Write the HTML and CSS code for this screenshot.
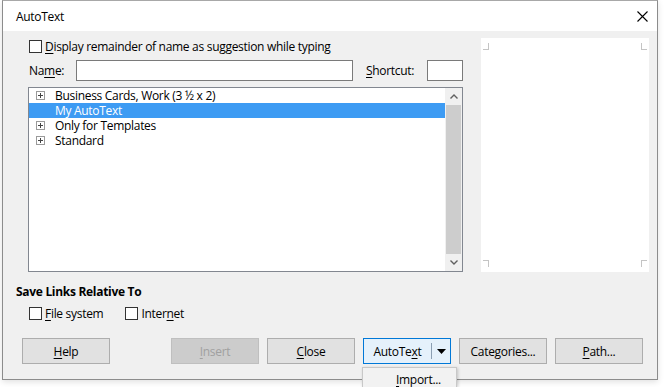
FILE: index.html
```html
<!DOCTYPE HTML>
<html lang="en-US">
<head>
<meta charset="UTF-8">
<title>AutoText</title>
<link rel="stylesheet" href="styles.css">
</head>
<body>
<div class="dialog">
	<div class="titlebar">
		<span class="title">AutoText</span>
		<svg class="close" width="11" height="11" viewBox="0 0 11 11"><path d="M0.5 0.5L10.5 10.5M10.5 0.5L0.5 10.5" stroke="#000" stroke-width="1.1" fill="none"/></svg>
	</div>
	<div class="main">
		<div class="left">
			<div class="check-row"><span class="box"></span><span><u>D</u>isplay remainder of name as suggestion while typing</span></div>
			<div class="name-row">
				<span class="name-label">Na<u>m</u>e:</span>
				<span class="field name-field"></span>
				<span class="shortcut-label"><u>S</u>hortcut:</span>
				<span class="field shortcut-field"></span>
			</div>
			<div class="tree">
				<ul class="tree-items">
					<li><svg class="expander" width="9" height="9" viewBox="0 0 9 9"><rect x="0.5" y="0.5" width="8" height="8" fill="#fff" stroke="#9a9a9a"/><path d="M2 4.5H7M4.5 2V7" stroke="#444"/></svg>Business Cards, Work (3 ½ x 2)</li>
					<li class="selected">My AutoText</li>
					<li><svg class="expander" width="9" height="9" viewBox="0 0 9 9"><rect x="0.5" y="0.5" width="8" height="8" fill="#fff" stroke="#9a9a9a"/><path d="M2 4.5H7M4.5 2V7" stroke="#444"/></svg>Only for Templates</li>
					<li><svg class="expander" width="9" height="9" viewBox="0 0 9 9"><rect x="0.5" y="0.5" width="8" height="8" fill="#fff" stroke="#9a9a9a"/><path d="M2 4.5H7M4.5 2V7" stroke="#444"/></svg>Standard</li>
				</ul>
				<div class="scrollbar">
					<span class="arrow"><svg width="8" height="5" viewBox="0 0 8 5"><path d="M0.5 4.5L4 1L7.5 4.5" stroke="#606060" stroke-width="1.4" fill="none"/></svg></span>
					<span class="thumb"></span>
					<span class="arrow"><svg width="8" height="5" viewBox="0 0 8 5"><path d="M0.5 0.5L4 4L7.5 0.5" stroke="#606060" stroke-width="1.4" fill="none"/></svg></span>
				</div>
			</div>
		</div>
		<div class="preview">
			<div class="marks"><span class="mark tl"></span><span class="mark tr"></span></div>
			<div class="marks"><span class="mark bl"></span><span class="mark br"></span></div>
		</div>
	</div>
	<div class="links-title">Save Links Relative To</div>
	<div class="links">
		<span class="link-opt"><span class="box"></span><span><u>F</u>ile system</span></span>
		<span class="link-opt"><span class="box"></span><span>Inter<u>n</u>et</span></span>
	</div>
	<div class="buttons">
		<span class="btn"><span><u>H</u>elp</span></span>
		<span class="btn disabled insert"><span><u>I</u>nsert</span></span>
		<span class="btn"><span><u>C</u>lose</span></span>
		<span class="btn split"><span class="split-text">AutoTe<u>x</u>t</span><span class="split-sep"></span><span class="split-arrow"><svg width="9" height="5" viewBox="0 0 9 5"><path d="M0 0H9L4.5 5Z" fill="#000"/></svg></span></span>
		<span class="btn"><span>Cate<u>g</u>ories...</span></span>
		<span class="btn"><span><u>P</u>ath...</span></span>
	</div>
	<div class="menu"><u>I</u>mport...</div>
</div>
</body>
</html>
```
FILE: styles.css
```css
html { overflow:hidden; }
html, body { margin:0; padding:0; }
body { min-height:387px; background:#fff; font:12px "Open Sans","Liberation Sans",sans-serif; letter-spacing:-0.3px; color:#000; }
u { text-decoration:underline; text-underline-offset:2px; }
.dialog { position:relative; box-sizing:border-box; width:656px; height:380px; margin-left:2px; background:#f0f0f0; border:1px solid #8c8c8c; border-top-color:#a8a8a8; box-shadow:0 2px 6px rgba(0,0,0,.12); }
.titlebar { display:flex; align-items:center; justify-content:space-between; height:30px; padding:0 9px 0 13px; background:#fff; }
.main { display:flex; padding:7px 7px 0 13px; }
.left { width:447px; }
.check-row { display:flex; align-items:center; height:17px; padding-left:13px; }
.box { box-sizing:border-box; width:13px; height:13px; margin-right:3px; background:#fff; border:1px solid #333; }
.name-row { display:flex; align-items:center; height:21px; margin-top:5px; }
.name-label { width:47px; padding-left:13px; }
.field { box-sizing:border-box; height:21px; background:#fff; border:1px solid #7a7a7a; }
.name-field { width:277px; }
.shortcut-label { margin-left:13px; }
.shortcut-field { width:36px; margin-left:auto; }
.tree { display:flex; box-sizing:border-box; height:185px; margin:6px 0 0 12px; background:#fff; border:1px solid #828790; }
.tree-items { flex:1; margin:0; padding:0; list-style:none; }
.tree-items li { display:flex; align-items:center; height:15px; padding-left:7px; line-height:15px; white-space:nowrap; }
.tree-items .selected { padding-left:26px; background:#3d9bf3; color:#fff; }
.expander { margin-right:10px; }
.scrollbar { display:flex; flex-direction:column; width:17px; background:#f0f0f0; }
.arrow { display:flex; align-items:center; justify-content:center; height:17px; }
.thumb { flex:1; margin:0 1px; background:#cdcdcd; }
.preview { box-sizing:border-box; display:flex; flex-direction:column; justify-content:space-between; width:168px; height:234px; margin-left:18px; padding:5px 2px; background:#fff; }
.marks { display:flex; justify-content:space-between; }
.mark { box-sizing:border-box; width:6px; height:7px; border:0 solid #c4c4c4; }
.tl { border-right-width:1px; border-bottom-width:1px; }
.tr { border-left-width:1px; border-bottom-width:1px; }
.bl { border-right-width:1px; border-top-width:1px; }
.br { border-left-width:1px; border-top-width:1px; }
.links-title { height:16px; margin:12px 0 0 13px; line-height:16px; font-weight:bold; }
.links { display:flex; align-items:center; gap:22px; height:18px; margin-top:4px; padding-left:26px; }
.link-opt { display:flex; align-items:center; }
.buttons { display:flex; gap:8px; margin-top:16px; padding-left:19px; }
.btn { box-sizing:border-box; display:flex; align-items:center; justify-content:center; width:88px; height:26px; background:#e1e1e1; border:1px solid #adadad; }
.insert { margin-left:53px; }
.disabled { background:#cccccc; border-color:#bfbfbf; color:#a0a0a0; }
.split { justify-content:flex-start; background:#e5f1fb; border-color:#0078d7; }
.split-text { flex:1; text-align:center; }
.split-sep { width:1px; height:16px; background:#8c9fb3; }
.split-arrow { display:flex; align-items:center; justify-content:center; width:18px; }
.menu { position:absolute; left:359px; top:366px; box-sizing:border-box; width:95px; height:20px; padding:5px 0 0 33px; line-height:14px; background:#f2f2f2; border:1px solid #c8c8c8; border-bottom:0; box-shadow:1px 1px 3px rgba(0,0,0,.2); }
```
